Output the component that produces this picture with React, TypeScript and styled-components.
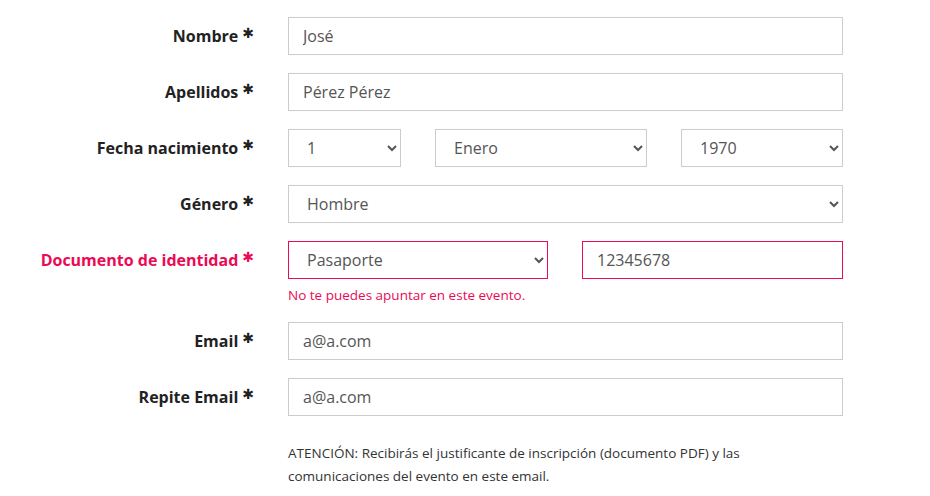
import React from 'react'
import styled, { createGlobalStyle } from 'styled-components'

const GlobalStyle = createGlobalStyle`
  body {
    margin: 0;
    background: #fff;
    font-family: "Open Sans", "Liberation Sans", sans-serif;
  }
`

const ERROR = '#ec0a54'

export default function App() {
  return (
    <>
      <GlobalStyle />
      <Form>
        <Row>
          <Label>Nombre<Req>✱</Req></Label>
          <Input defaultValue="José" />
        </Row>
        <Row>
          <Label>Apellidos<Req>✱</Req></Label>
          <Input defaultValue="Pérez Pérez" />
        </Row>
        <Row>
          <Label>Fecha nacimiento<Req>✱</Req></Label>
          <DateGroup>
            <Select defaultValue="1">
              <option>1</option>
            </Select>
            <Select defaultValue="Enero">
              <option>Enero</option>
            </Select>
            <Select defaultValue="1970">
              <option>1970</option>
            </Select>
          </DateGroup>
        </Row>
        <Row>
          <Label>Género<Req>✱</Req></Label>
          <Select defaultValue="Hombre">
            <option>Hombre</option>
            <option>Mujer</option>
          </Select>
        </Row>
        <Row>
          <Label $error>Documento de identidad<Req>✱</Req></Label>
          <Field>
            <DocGroup>
              <Select $error defaultValue="Pasaporte">
                <option>Pasaporte</option>
                <option>DNI</option>
              </Select>
              <Input $error defaultValue="12345678" />
            </DocGroup>
            <ErrorText>No te puedes apuntar en este evento.</ErrorText>
          </Field>
        </Row>
        <Row>
          <Label>Email<Req>✱</Req></Label>
          <Input defaultValue="a@a.com" />
        </Row>
        <Row>
          <Label>Repite Email<Req>✱</Req></Label>
          <Input defaultValue="a@a.com" />
        </Row>
        <Row>
          <span />
          <Note>
            ATENCIÓN: Recibirás el justificante de inscripción (documento PDF) y las
            comunicaciones del evento en este email.
          </Note>
        </Row>
      </Form>
    </>
  )
}

const Form = styled.form`
  display: flex;
  flex-direction: column;
  gap: 18px;
  padding-top: 17px;
`

const Row = styled.div`
  display: grid;
  grid-template-columns: 254px 555px;
  column-gap: 34px;
  align-items: start;
`

const Label = styled.label<{ $error?: boolean }>`
  display: flex;
  justify-content: flex-end;
  align-items: center;
  height: 38px;
  font-size: 16px;
  font-weight: 700;
  color: ${p => (p.$error ? ERROR : '#222')};
  white-space: nowrap;
`

const Req = styled.span`
  font-family: "DejaVu Sans", sans-serif;
  font-size: 14px;
  margin-left: 4px;
  position: relative;
  top: -3px;
`

const fieldBase = `
  box-sizing: border-box;
  height: 38px;
  width: 100%;
  border-radius: 0;
  background: #fff;
  color: #555;
  font-family: "Open Sans", "Liberation Sans", sans-serif;
  font-size: 16px;
  outline: none;
`

const Input = styled.input<{ $error?: boolean }>`
  ${fieldBase}
  border: 1px solid ${p => (p.$error ? ERROR : '#ccc')};
  padding: 0 14px;
`

const Select = styled.select<{ $error?: boolean }>`
  ${fieldBase}
  border: 1px solid ${p => (p.$error ? ERROR : '#ccc')};
  padding: 0 4px 0 14px;
`

const DateGroup = styled.div`
  display: grid;
  grid-template-columns: 113px 212px 162px;
  justify-content: space-between;
`

const DocGroup = styled.div`
  display: grid;
  grid-template-columns: 260px 261px;
  justify-content: space-between;
`

const Field = styled.div`
  display: flex;
  flex-direction: column;
`

const ErrorText = styled.div`
  margin-top: 7px;
  font-size: 13.5px;
  line-height: 18px;
  color: ${ERROR};
`

const Note = styled.p`
  margin: 8px 0 0;
  max-width: 470px;
  font-size: 13.5px;
  line-height: 23px;
  color: #333;
`
